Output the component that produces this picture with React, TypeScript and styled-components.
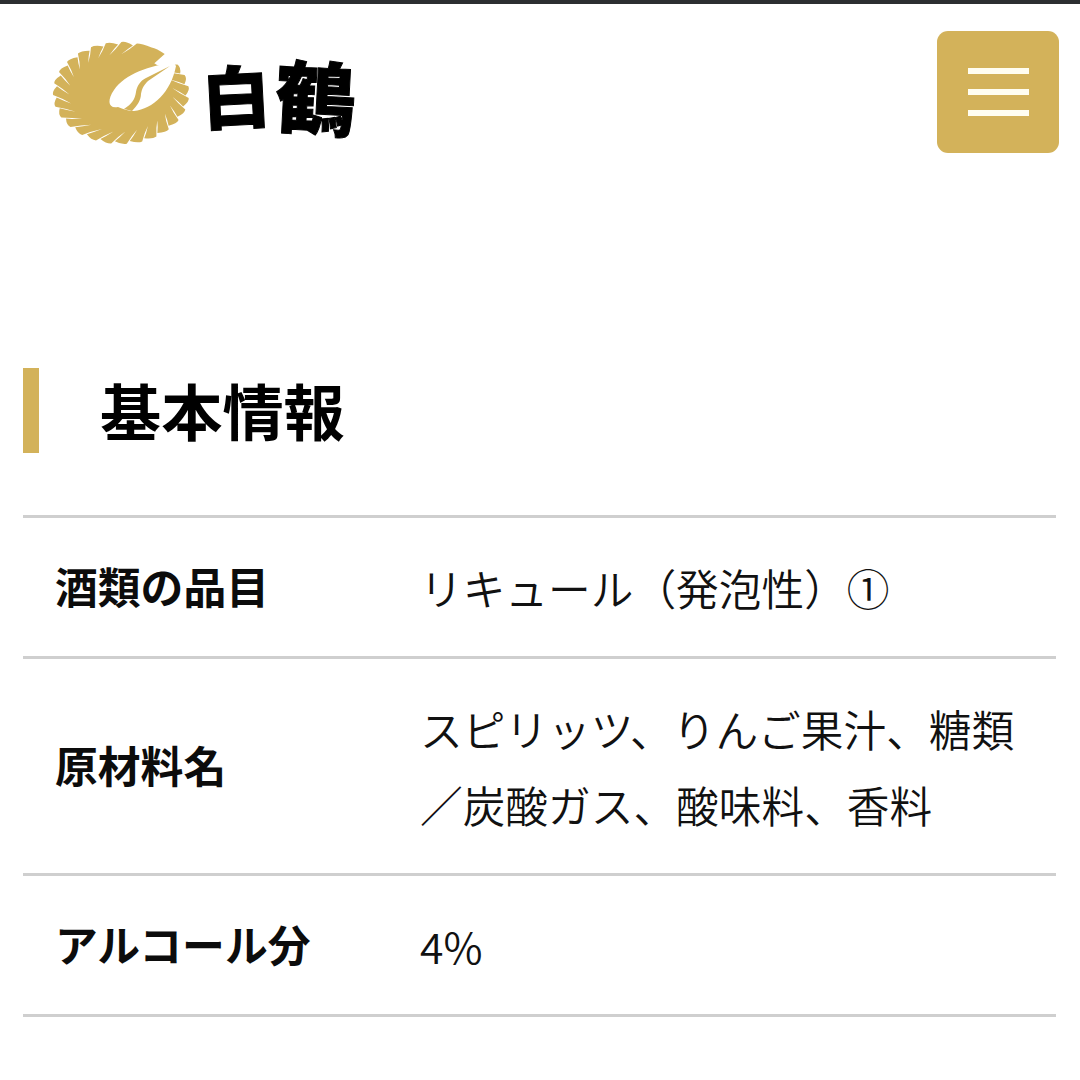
import React from 'react';
import styled, { createGlobalStyle } from 'styled-components';

const GOLD = '#d3b25a';
const LINE = '#cfcfcf';

const GlobalStyle = createGlobalStyle`
html, body {
  margin: 0;
  padding: 0;
  background: #fff;
  color: #111;
  font-family: "Noto Sans CJK JP", "Noto Sans", sans-serif;
}
`

const StatusEdge = styled.div`
height: 4px;
background: #2c2e31;
`

const Header = styled.header`
display: flex;
align-items: center;
justify-content: space-between;
padding: 27px 21px 0 45px;
`

const Logo = styled.div`
display: flex;
align-items: center;
gap: 7px;
`

const Emblem = styled.svg`
display: block;
width: 150px;
height: 112px;
`

const LogoText = styled.div`
display: flex;
align-items: center;
gap: 6px;
margin-top: 4px;
color: #000;
font-weight: 900;
-webkit-text-stroke: 1px #000;
`

const LogoChar = styled.span<{ $size: number; $tilt: number }>`
display: block;
font-size: ${props => props.$size}px;
line-height: 84px;
transform: rotate(${props => props.$tilt}deg);
`

const MenuButton = styled.button`
display: flex;
flex-direction: column;
align-items: center;
justify-content: center;
gap: 15px;
width: 122px;
height: 122px;
padding: 0;
border: 0;
border-radius: 11px;
background: ${GOLD};
`

const MenuLine = styled.span`
display: block;
width: 61px;
height: 6px;
background: #fffdf0;
`

const Main = styled.main`
padding: 0 24px 0 23px;
`

const Heading = styled.h2`
margin: 215px 0 62px;
padding-left: 61px;
height: 85px;
border-left: 16px solid ${GOLD};
font-size: 61.2px;
line-height: 83px;
font-weight: 700;
color: #000;
`

const InfoList = styled.dl`
margin: 0;
border-bottom: 3px solid ${LINE};
`

const InfoRow = styled.div`
display: grid;
grid-template-columns: 365px 1fr;
align-items: center;
padding: 31px 0 31px 32px;
border-top: 3px solid ${LINE};
`

const Label = styled.dt`
padding-bottom: 3px;
font-size: 42.8px;
line-height: 73px;
font-weight: 700;
color: #0c0c0c;
`

const Value = styled.dd`
margin: 0;
font-size: 42.7px;
line-height: 76px;
font-weight: 350;
color: #111;
`

// feathers round the ellipse, each one a soft lobe with a thin slit leaning along the sweep
function featherPath(): string {
  const cx = 76, cy = 57, rx = 68, ry = 51;
  const count = 26;
  const start = -50;
  const sweep = -344;
  const step = sweep / count;
  const at = (deg: number, r: number) => {
    const a = (deg * Math.PI) / 180;
    return `${(cx + rx * r * Math.cos(a)).toFixed(1)} ${(cy + ry * r * Math.sin(a)).toFixed(1)}`;
  };
  let d = `M${at(start, 0.7)} L${at(start, 1)}`;
  for (let i = 0; i < count; i++) {
    const a0 = start + step * i;
    const a1 = a0 + step;
    // the first feathers by the gap lie flat, no slit
    if (i > 1) {
      d += ` Q${at(a0 + step * 0.4, 0.86)} ${at(a0 + step, 0.76)}`;
      d += ` Q${at(a0 + step * 0.55, 0.87)} ${at(a0 + step * 0.22, 0.95)}`;
    }
    d += ` Q${at(a0 + step * 0.7, 1.02)} ${at(a1, 1)}`;
  }
  return `${d} Z`;
}

const feathers = featherPath();

function CraneEmblem(): JSX.Element {
  return (
    <Emblem viewBox="0 0 150 112" aria-hidden="true">
      <ellipse cx="76" cy="57" rx="52" ry="39" fill={GOLD} />
      <path d={feathers} fill={GOLD} />
      <path d="M129 27 C105 29 80 38 69 54 C62 64 63 73 73 71 C78 73 83 75 89 75 C108 73 126 56 131 30 Z" fill="#fff" />
      <path d="M125 30 L101 42 C95 45 92 50 91 56 C90 63 87 68 79 73 L87 75 C92 70 96 64 96 58 C97 53 98 50 103 45 Z" fill={GOLD} />
    </Emblem>
  );
}

const rows = [
  { label: '酒類の品目', value: ['リキュール（発泡性）①'] },
  { label: '原材料名', value: ['スピリッツ、りんご果汁、糖類', '／炭酸ガス、酸味料、香料'] },
  { label: 'アルコール分', value: ['4%'] },
];

function App(): JSX.Element {
  return (
    <>
      <GlobalStyle />
      <StatusEdge />
      <Header>
        <Logo>
          <CraneEmblem />
          <LogoText>
            <LogoChar $size={68} $tilt={-3}>白</LogoChar>
            <LogoChar $size={80} $tilt={3}>鶴</LogoChar>
          </LogoText>
        </Logo>
        <MenuButton aria-label="menu">
          <MenuLine />
          <MenuLine />
          <MenuLine />
        </MenuButton>
      </Header>
      <Main>
        <Heading>基本情報</Heading>
        <InfoList>
          {rows.map(row => (
            <InfoRow key={row.label}>
              <Label>{row.label}</Label>
              <Value>
                {row.value.map(line => (
                  <div key={line}>{line}</div>
                ))}
              </Value>
            </InfoRow>
          ))}
        </InfoList>
      </Main>
    </>
  );
}

export default App;
